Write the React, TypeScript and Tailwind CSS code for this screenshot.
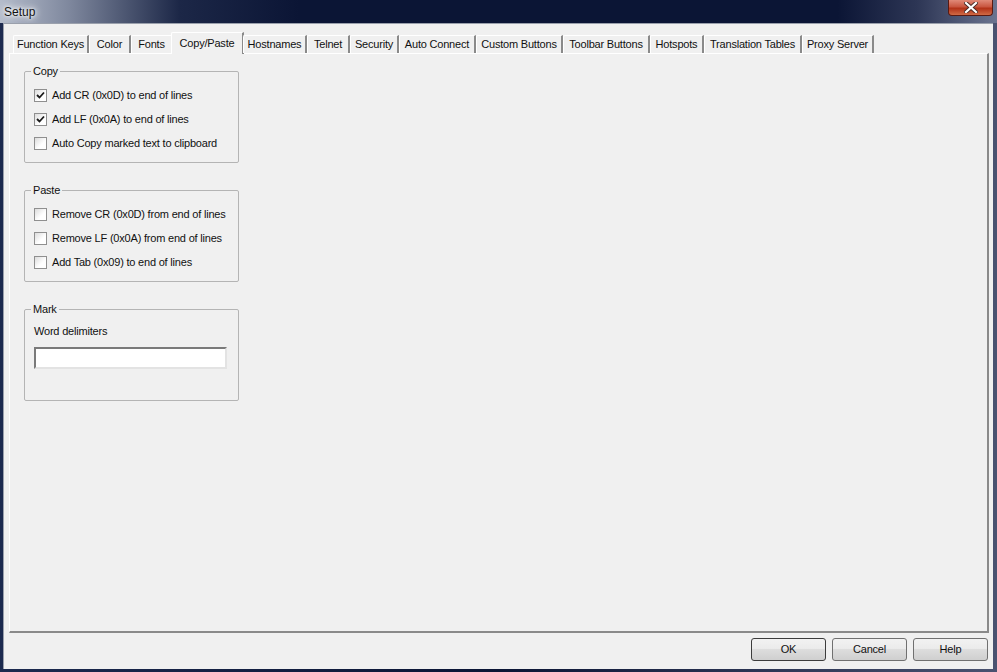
import * as React from "react";

const tabs = [
  {label: "Function Keys", w: "w-[76px]"},
  {label: "Color", w: "w-[42px]"},
  {label: "Fonts", w: "w-[42px]"},
  {label: "Copy/Paste", w: "w-[73px]", active: true},
  {label: "Hostnames", w: "w-[64px]"},
  {label: "Telnet", w: "w-[43px]"},
  {label: "Security", w: "w-[49px]"},
  {label: "Auto Connect", w: "w-[77px]"},
  {label: "Custom Buttons", w: "w-[87px]"},
  {label: "Toolbar Buttons", w: "w-[87px]"},
  {label: "Hotspots", w: "w-[54px]"},
  {label: "Translation Tables", w: "w-[98px]"},
  {label: "Proxy Server", w: "w-[72px]"},
];

function Check({checked, label}: {checked?: boolean; label: string}) {
  return (
    <div className="flex items-center h-[24px] pl-[9px]">
      <span className="w-[13px] h-[13px] border border-[#8f8f8f] bg-[linear-gradient(135deg,#dcdcdc,#ffffff_60%)] flex items-center justify-center">
        {checked && (
          <svg width="9" height="9" viewBox="0 0 9 9">
            <path d="M1 4 L3.5 6.5 L8 1.5" stroke="#1a1a1a" strokeWidth="1.8" fill="none" />
          </svg>
        )}
      </span>
      <span className="ml-[5px] text-[#111]">{label}</span>
    </div>
  );
}

function Group({title, children}: {title: string; children: React.ReactNode}) {
  return (
    <fieldset className="w-[215px] h-[98px] border border-[#b4b4b4] rounded-[2px] px-0 pt-[5px]">
      <legend className="ml-[6px] px-[2px] text-[#111] leading-[13px]">{title}</legend>
      {children}
    </fieldset>
  );
}

function Btn({label, primary}: {label: string; primary?: boolean}) {
  return (
    <button
      className={
        "w-[75px] h-[23px] rounded-[3px] border bg-[linear-gradient(#f2f2f2,#ebebeb_45%,#dddddd_50%,#cfcfcf)] text-[#111] " +
        (primary ? "border-[#3c3c3c]" : "border-[#707070]")
      }
    >
      {label}
    </button>
  );
}

export default function App() {
  return (
    <div className="w-[997px] h-[672px] flex flex-col bg-[#0b1535] text-[11px] tracking-[-0.2px] font-['Liberation_Sans',Arial,sans-serif] overflow-hidden">
      {/* title bar */}
      <div className="h-[23px] flex items-start justify-between bg-[linear-gradient(90deg,#b4bccb_0%,#7e879d_7%,#1c2747_18%,#0b1535_30%,#0b1535_84%,#2d3655_92%,#6b7490_100%)]">
        <span className="ml-[4px] mt-[3px] text-[12px] tracking-normal text-[#121212] [text-shadow:0_0_6px_#fff,0_0_3px_#fff,0_0_10px_#fff]">
          Setup
        </span>
        <div className="mr-[4px] w-[45px] h-[16px] rounded-b-[4px] border border-t-0 border-[#5a1a12] bg-[linear-gradient(#e08a78,#c95640_45%,#b23218_55%,#d06a45)] flex items-center justify-center">
          <svg width="14" height="11" viewBox="0 0 14 11">
            <path d="M2 1 L12 10 M12 1 L2 10" stroke="#4a2a26" strokeWidth="4" strokeLinecap="square" />
            <path d="M2 1 L12 10 M12 1 L2 10" stroke="#ffffff" strokeWidth="2.2" strokeLinecap="square" />
          </svg>
        </div>
      </div>
      {/* body with frame */}
      <div className="flex-1 flex pl-[3px] pr-[4px] pb-[3px] bg-[linear-gradient(90deg,#1c2a4f,#0b1535_50%,#4a5270)]">
        <div className="flex-1 bg-[#f0f0f0] border-t border-l border-[#9aa0ac] pl-[5px] pt-[8px] pr-[4px] flex flex-col">
          {/* tabs */}
          <div className="h-[21px] flex items-end pl-[4px] relative z-10">
            {tabs.map((t) =>
              t.active ? (
                <div
                  key={t.label}
                  className={
                    t.w +
                    " h-[22px] -mb-[1px] -ml-[2px] -mr-[1px] px-[4px] bg-[#f0f0f0] border-t border-l border-white border-r-2 border-r-[#8a8a8a] flex items-center justify-center text-[#111] rounded-tl-[2px]"
                  }
                >
                  {t.label}
                </div>
              ) : (
                <div
                  key={t.label}
                  className={
                    t.w +
                    " h-[18px] border-t border-l border-white border-r-2 border-r-[#8a8a8a] flex items-center justify-center text-[#111] rounded-tl-[2px]"
                  }
                >
                  {t.label}
                </div>
              )
            )}
          </div>
          {/* panel */}
          <div className="h-[580px] border-t border-l border-white border-r-2 border-b-2 border-r-[#8a8a8a] border-b-[#8a8a8a] pl-[14px] pt-[11px] flex flex-col gap-[21px]">
            <Group title="Copy">
              <Check checked label="Add CR (0x0D) to end of lines" />
              <Check checked label="Add LF (0x0A) to end of lines" />
              <Check label="Auto Copy marked text to clipboard" />
            </Group>
            <Group title="Paste">
              <Check label="Remove CR (0x0D) from end of lines" />
              <Check label="Remove LF (0x0A) from end of lines" />
              <Check label="Add Tab (0x09) to end of lines" />
            </Group>
            <Group title="Mark">
              <div className="pl-[9px] pt-[2px] text-[#111]">Word delimiters</div>
              <div className="ml-[9px] mt-[7px] w-[193px] h-[22px] bg-white border-2 border-t-[#7a7a7a] border-l-[#7a7a7a] border-r-[#e3e3e3] border-b-[#e3e3e3]" />
            </Group>
          </div>
          {/* buttons */}
          <div className="flex justify-end gap-[6px] pt-[5px] pr-[1px]">
            <Btn label="OK" primary />
            <Btn label="Cancel" />
            <Btn label="Help" />
          </div>
        </div>
      </div>
    </div>
  );
}
